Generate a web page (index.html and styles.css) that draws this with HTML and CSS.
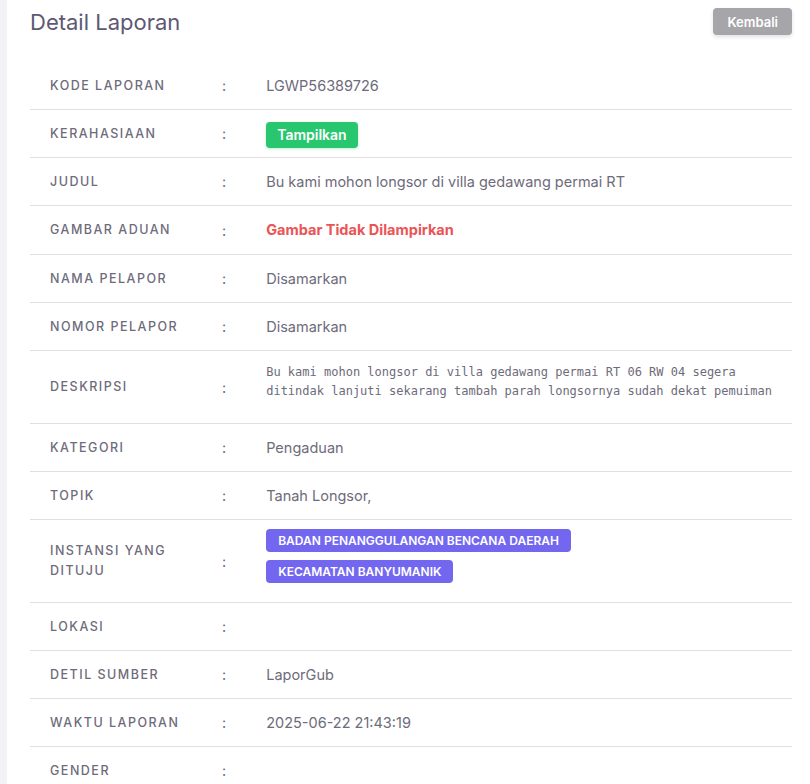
FILE: index.html
```html
<!DOCTYPE html>
<html>
    <head>
        <title>Detail Laporan</title>
        <meta charset="UTF-8" />
        <link rel="stylesheet" href="styles.css">
    </head>
    <body>
        <div class="page">
            <div class="card">
                <div class="card-header">
                    <h4 class="card-title">Detail Laporan</h4>
                    <button class="btn btn-back">Kembali</button>
                </div>
                <table class="detail">
                    <tr>
                        <th>Kode Laporan</th>
                        <td class="sep">:</td>
                        <td>LGWP56389726</td>
                    </tr>
                    <tr>
                        <th>Kerahasiaan</th>
                        <td class="sep">:</td>
                        <td><span class="badge badge-success">Tampilkan</span></td>
                    </tr>
                    <tr>
                        <th>Judul</th>
                        <td class="sep">:</td>
                        <td>Bu kami mohon longsor di villa gedawang permai RT</td>
                    </tr>
                    <tr>
                        <th>Gambar Aduan</th>
                        <td class="sep">:</td>
                        <td class="text-danger">Gambar Tidak Dilampirkan</td>
                    </tr>
                    <tr>
                        <th>Nama Pelapor</th>
                        <td class="sep">:</td>
                        <td>Disamarkan</td>
                    </tr>
                    <tr>
                        <th>Nomor Pelapor</th>
                        <td class="sep">:</td>
                        <td>Disamarkan</td>
                    </tr>
                    <tr>
                        <th>Deskripsi</th>
                        <td class="sep">:</td>
                        <td><pre>Bu kami mohon longsor di villa gedawang permai RT 06 RW 04 segera ditindak lanjuti sekarang tambah parah longsornya sudah dekat pemuiman</pre></td>
                    </tr>
                    <tr>
                        <th>Kategori</th>
                        <td class="sep">:</td>
                        <td>Pengaduan</td>
                    </tr>
                    <tr>
                        <th>Topik</th>
                        <td class="sep">:</td>
                        <td>Tanah Longsor,</td>
                    </tr>
                    <tr>
                        <th>Instansi Yang Dituju</th>
                        <td class="sep">:</td>
                        <td>
                            <div class="badge-list">
                                <span class="badge badge-primary">Badan Penanggulangan Bencana Daerah</span>
                                <span class="badge badge-primary">Kecamatan Banyumanik</span>
                            </div>
                        </td>
                    </tr>
                    <tr>
                        <th>Lokasi</th>
                        <td class="sep">:</td>
                        <td></td>
                    </tr>
                    <tr>
                        <th>Detil Sumber</th>
                        <td class="sep">:</td>
                        <td>LaporGub</td>
                    </tr>
                    <tr>
                        <th>Waktu Laporan</th>
                        <td class="sep">:</td>
                        <td>2025-06-22 21:43:19</td>
                    </tr>
                    <tr>
                        <th>Gender</th>
                        <td class="sep">:</td>
                        <td></td>
                    </tr>
                </table>
            </div>
        </div>
    </body>
</html>
```

FILE: styles.css
```css
body {
    margin: 0;
    color: #6e6b7b;
    font-family: Inter, "Noto Sans", sans-serif;
    font-size: 14.5px;
    background: #f3f2f7;
}
.page {
    padding-left: 7px;
}
.card {
    background: #fff;
    padding: 8px 18px 0 23px;
    min-height: 784px;
    box-sizing: border-box;
}
.card-header {
    display: flex;
    justify-content: space-between;
    align-items: flex-start;
    height: 54px;
}
.card-title {
    margin: 0;
    font-size: 22px;
    font-weight: 400;
    color: #5e5873;
    line-height: 28px;
}
.btn-back {
    background-color: #a5a5aa;
    color: #fff;
    border: none;
    border-radius: 4px;
    font-family: inherit;
    font-size: 13px;
    font-weight: 600;
    height: 27px;
    padding: 0 14px;
    box-shadow: 0 2px 4px rgba(0, 0, 0, 0.12);
}

/* detail table */
.detail {
    width: 100%;
    border-collapse: collapse;
}
.detail tr {
    border-bottom: 1px solid #e0e0e4;
}
.detail th,
.detail td {
    padding: 12px 20px;
    height: 23px;
    line-height: 23px;
    vertical-align: middle;
    text-align: left;
}
.detail th {
    width: 132px;
    font-size: 12.5px;
    font-weight: 500;
    letter-spacing: 1.5px;
    text-transform: uppercase;
    line-height: 20px;
}
.detail td.sep {
    width: 4px;
    padding: 0 20px;
}
.detail td:last-child {
    padding-right: 8px;
}
.detail pre {
    margin: 0 0 10px;
    font-family: "DejaVu Sans Mono", monospace;
    font-size: 12px;
    line-height: 19px;
    white-space: pre-wrap;
    color: #6e6b7b;
}

.badge {
    display: inline-block;
    color: #fff;
    border-radius: 4px;
    font-weight: 600;
    vertical-align: middle;
}
.badge-success {
    background-color: #28c76f;
    font-size: 14px;
    line-height: 26px;
    padding: 0 11px;
    margin: -3px 0;
    box-shadow: 0 1px 3px rgba(40, 199, 111, 0.3);
}
.badge-primary {
    background-color: #7367f0;
    font-size: 12px;
    line-height: 23px;
    padding: 0 12px;
    text-transform: uppercase;
}
.badge-list {
    display: flex;
    flex-direction: column;
    align-items: flex-start;
    gap: 8px;
    margin-top: -3px;
    padding-bottom: 7px;
}
.detail td.text-danger {
    color: #ea5455;
    font-weight: 700;
    line-height: 24px;
}
```
